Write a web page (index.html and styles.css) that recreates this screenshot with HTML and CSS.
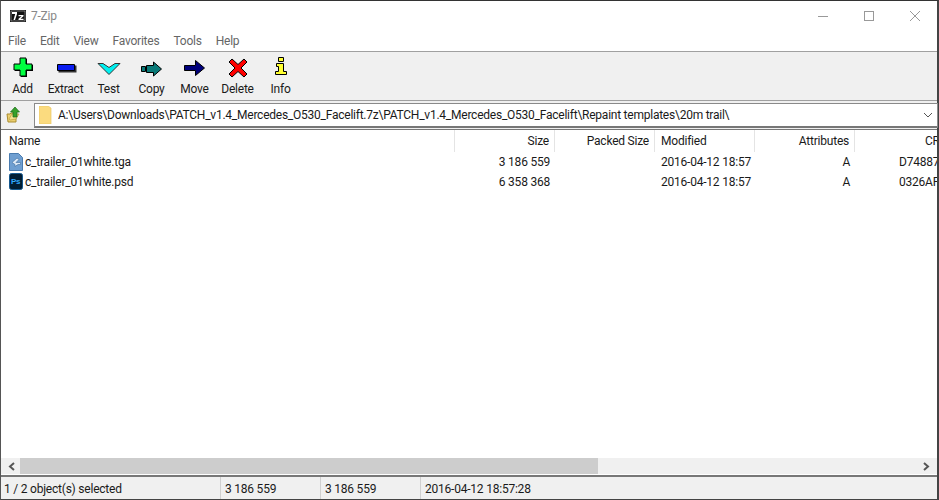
FILE: index.html
```html
<!DOCTYPE html>
<html lang="en">
<head>
<meta charset="utf-8">
<title>7-Zip</title>
<link rel="stylesheet" href="styles.css">
</head>
<body>
<div class="window">
  <header class="titlebar">
    <svg class="appicon" width="16" height="12" viewBox="0 0 16 12"><rect x=".5" y=".5" width="15" height="11" fill="#111" stroke="#111"/><path d="M2 2h5v2l-2 6H3.500l1.700-6H2z" fill="#fff"/><rect x="1" y="1" width="14" height="10" fill="none" stroke="#fff" stroke-width=".4"/><path d="M8.500 5h5v1.200L10.500 8.800h3V10h-5V8.800L11.500 6.200h-3z" fill="#fff"/></svg>
    <span class="apptitle">7-Zip</span>
    <div class="winbtns">
      <svg class="winbtn" width="46" height="30" viewBox="0 0 46 30"><path d="M18 15.500h10" stroke="#999" fill="none"/></svg>
      <svg class="winbtn" width="46" height="30" viewBox="0 0 46 30"><rect x="18.500" y="10.500" width="9" height="9" stroke="#999" fill="none"/></svg>
      <svg class="winbtn" width="46" height="30" viewBox="0 0 46 30"><path d="M18 10l10 10M28 10L18 20" stroke="#999" fill="none"/></svg>
    </div>
  </header>
  <nav class="menubar">
    <span>File</span><span>Edit</span><span>View</span><span>Favorites</span><span>Tools</span><span>Help</span>
  </nav>
  <div class="toolbar">
    <div class="tool t-add"><svg width="24" height="24" viewBox="0 0 24 24"><path d="M3 8h6V2h6v6h6v6h-6v6H9v-6H3z" transform="translate(1 1)" fill="#000"/><path d="M3 8h6V2h6v6h6v6h-6v6H9v-6H3z" fill="#00ff40" stroke="#000"/></svg><span>Add</span></div>
    <div class="tool t-extract"><svg width="24" height="24" viewBox="0 0 24 24"><path d="M3.500 8.500h18v7h-18z" transform="translate(1 1)" fill="#333"/><path d="M3.500 8.500h17v6h-17z" fill="#0a1cf0" stroke="#000"/></svg><span>Extract</span></div>
    <div class="tool t-test"><svg width="24" height="24" viewBox="0 0 24 24"><path d="M1 7.500h5l6 4 6-4h5L12 18.500z" fill="#00f0f0" stroke="#333"/></svg><span>Test</span></div>
    <div class="tool t-copy"><svg width="24" height="24" viewBox="0 0 24 24"><path d="M1.500 10.500h4v5h-4z" fill="#0a7a78" stroke="#000"/><path d="M6.500 9.500h7v-3.500l8 7-8 7v-3.500h-7z" fill="#0a7a78" stroke="#000"/></svg><span>Copy</span></div>
    <div class="tool t-move"><svg width="24" height="24" viewBox="0 0 24 24"><path d="M1.500 9.500h11v-5l9 7.500-9 7.500v-5h-11z" fill="#00007a" stroke="#000"/></svg><span>Move</span></div>
    <div class="tool t-delete"><svg width="24" height="24" viewBox="0 0 24 24"><path d="M6 3l6 5.500L18 3l3 3-6 6 6 6-3 3-6-5.500L6 21l-3-3 6-6-6-6z" fill="#ff0000" stroke="#000"/></svg><span>Delete</span></div>
    <div class="tool t-info"><svg width="24" height="24" viewBox="0 0 24 24"><path d="M9.500 1.500h5v4h-5zM7.500 7.500h7v8h3v3H6.500v-3h3v-5h-2z" fill="#ffff33" stroke="#000"/></svg><span>Info</span></div>
  </div>
  <div class="addressbar">
    <svg class="upicon" width="18" height="20" viewBox="0 0 18 20"><path d="M2 9h3l1-1h5v9H3z" fill="#eccf6e" stroke="#a98c30"/><path d="M5 15l6-1 3-5h-7l-3 5z" fill="#f5e08e" stroke="#b09538" stroke-width=".6"/><path d="M8 12V7H5.500L10 2l4.500 5H12v5z" fill="#36a02c" stroke="#1d6b18" stroke-width=".7"/></svg>
    <div class="pathbox">
      <svg class="foldericon" width="14" height="18" viewBox="0 0 14 18"><path d="M0 0h9l3 2v16H0z" fill="#fbdb7f" stroke="#e8c566" stroke-width=".7"/></svg>
      <span class="pathtext">A:\Users\Downloads\PATCH_v1.4_Mercedes_O530_Facelift.7z\PATCH_v1.4_Mercedes_O530_Facelift\Repaint templates\20m trail\</span>
      <svg class="chev" width="10" height="6" viewBox="0 0 10 6"><path d="M1 1l4 4 4-4" fill="none" stroke="#555"/></svg>
    </div>
  </div>
  <main class="list">
    <div class="grid head">
      <div class="c name">Name</div><div class="c num">Size</div><div class="c num">Packed Size</div><div class="c left">Modified</div><div class="c num">Attributes</div><div class="c crc">CRC</div>
    </div>
    <div class="grid row">
      <div class="c name"><svg width="14" height="18" viewBox="0 0 14 18"><path d="M.5.500h9l4 4v13H.500z" fill="#6f9fd1" stroke="#4a7cb0"/><path d="M8 5L3 9.500l3 2v2l3-2h2.500v-2H7l3-3z" fill="#dce9f6" stroke="#3d6c9e" stroke-width=".6"/></svg><span>c_trailer_01white.tga</span></div>
      <div class="c num">3 186 559</div><div class="c num"></div><div class="c left">2016-04-12 18:57</div><div class="c num">A</div><div class="c crc data">D74887</div>
    </div>
    <div class="grid row">
      <div class="c name"><svg width="14" height="18" viewBox="0 0 14 18"><rect x=".5" y=".5" width="13" height="16" rx="2" fill="#001d34" stroke="#16598f"/><text x="2" y="11" class="psd">Ps</text></svg><span>c_trailer_01white.psd</span></div>
      <div class="c num">6 358 368</div><div class="c num"></div><div class="c left">2016-04-12 18:57</div><div class="c num">A</div><div class="c crc data">0326AF</div>
    </div>
    <div class="spacer"></div>
    <div class="hscroll">
      <svg class="arrow" width="19" height="15" viewBox="0 0 19 15"><path d="M13 4L9 7.500l4 3.500" fill="none" stroke="#555" stroke-width="2"/></svg>
      <div class="track"><div class="thumb"></div></div>
      <svg class="arrow" width="20" height="15" viewBox="0 0 20 15"><path d="M7 4l4 3.500L7 11" fill="none" stroke="#555" stroke-width="2"/></svg>
    </div>
  </main>
  <footer class="status">
    <div class="s s1">1 / 2 object(s) selected</div>
    <div class="s s2">3 186 559</div>
    <div class="s s3">3 186 559</div>
    <div class="s s4">2016-04-12 18:57:28</div>
  </footer>
</div>
</body>
</html>
```
FILE: styles.css
```css
* { box-sizing: border-box; }
html, body { margin: 0; padding: 0; height: 100%; overflow: hidden; background: #fff; }
body { font: 12px/16px Roboto, "Noto Sans", sans-serif; color: #1a1a1a; letter-spacing: -.22px; }
.window {
  width: 939px; height: 500px; display: flex; flex-direction: column;
  border-top: 1px solid #333; border-left: 1px solid #555;
  border-right: 2px solid #444; border-bottom: 1px solid #444;
  background: #fff;
}
.titlebar { height: 29px; display: flex; align-items: center; padding-left: 9px; flex: none; }
.apptitle { margin-left: 5px; color: #888; }
.winbtns { margin-left: auto; display: flex; margin-right: -1px; }
.winbtn { display: block; }
.menubar { height: 22px; display: flex; flex: none; padding-left: 7px; color: #666; align-items: center; border-bottom: 1px solid #a0a0a0; }
.menubar span { display: block; margin-right: 14px; }
.toolbar { height: 49px; flex: none; background: #f0f0f0; display: flex; border-bottom: 1px solid #a0a0a0; }
.tool { display: flex; flex-direction: column; align-items: center; width: 43px; padding-top: 4px; }
.tool svg { display: block; }
.tool span { margin-top: 1px; line-height: 16px; }
.addressbar { height: 28px; flex: none; background: #f0f0f0; display: flex; align-items: center; padding-left: 4px; }
.upicon { flex: none; }
.pathbox { margin-left: 11px; margin-right: -1px; flex: 1; height: 25px; background: #fff; border: 1px solid #8a8a8a; border-bottom: 2px solid #777; display: flex; align-items: center; padding-left: 4px; min-width: 0; }
.foldericon { flex: none; }
.pathtext { margin-left: 5px; white-space: nowrap; flex: 1; overflow: hidden; letter-spacing: -.24px; }
.chev { flex: none; margin: 0 4px 0 0; }
.list { flex: 1; min-height: 0; display: flex; flex-direction: column; border-top: 1px solid #777; border-bottom: 2px solid #777; overflow: hidden; }
.grid { display: grid; grid-template-columns: 454px 100px 100px 100px 100px 90px; width: 944px; flex: none; }
.head { height: 22px; }
.head .c { border-right: 1px solid #e4e4e4; line-height: 22px; }
.head .crc { border-right: 0; }
.row { height: 20px; }
.c { padding: 0 5px; white-space: nowrap; overflow: hidden; line-height: 20px; }
.num { text-align: right; }
.left { text-align: left; padding-left: 6px; }
.crc { text-align: right; padding: 0 0 0 70px; }
.head .crc { padding-right: 10px; }
.crc.data { text-align: left; padding-left: 44px; }
.name { display: flex; align-items: center; gap: 2px; padding-left: 8px; }
.name svg { flex: none; }
.psd { font: bold 8px "Liberation Sans", sans-serif; fill: #31a8ff; }
.spacer { flex: 1; }
.hscroll { height: 17px; flex: none; background: #f0f0f0; display: flex; align-items: center; border-top: 1px solid #fff; margin-bottom: 1px; }
.arrow { flex: none; display: block; }
.track { flex: 1; height: 100%; }
.thumb { width: 578px; height: 100%; background: #cdcdcd; }
.status { height: 22px; flex: none; background: #f0f0f0; display: flex; align-items: center; }
.s { height: 100%; line-height: 24px; padding-left: 3px; border-right: 1px solid #d0d0d0; white-space: nowrap; }
.s1 { width: 220px; }
.s2 { width: 100px; padding-left: 4px; }
.s3 { width: 100px; padding-left: 4px; }
.s4 { border-right: 0; padding-left: 4px; }
```
